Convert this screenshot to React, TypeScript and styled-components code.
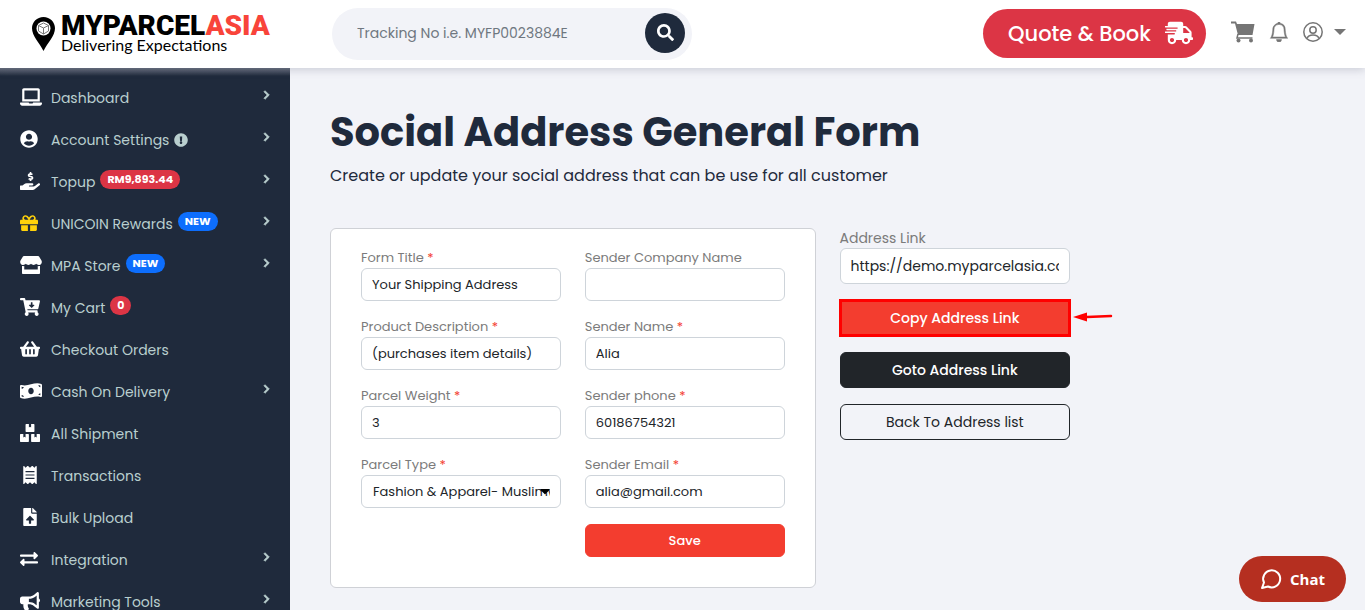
import React from 'react';
import styled, { createGlobalStyle, css } from 'styled-components';
import {
  FaLaptop, FaUserCircle, FaHandHoldingUsd, FaGift, FaStore, FaCartArrowDown,
  FaShoppingBasket, FaMoneyBillWave, FaBoxes, FaReceipt, FaFileUpload, FaExchangeAlt,
  FaBullhorn, FaExclamationCircle, FaShippingFast, FaCaretDown, FaSearch,
} from 'react-icons/fa';
import { BiChevronRight } from 'react-icons/bi';
import { BsBell } from 'react-icons/bs';

const navy = '#1f2a3c';
const red = '#f33d2f';
const crimson = '#dc3545';

const GlobalStyle = createGlobalStyle`
  *, *::before, *::after { box-sizing: border-box; }
  body {
    margin: 0;
    background: #f2f3f8;
    color: ${navy};
    font-family: Poppins, Inter, sans-serif;
    font-size: 14px;
  }
  button, input, select { font-family: inherit; }
  a { color: inherit; text-decoration: none; }
`;

const Page = styled.div`
  display: flex;
  flex-direction: column;
  height: 100vh;
  overflow: hidden;
`;

const TopBar = styled.header`
  position: relative;
  z-index: 1;
  display: flex;
  align-items: center;
  flex: none;
  height: 68px;
  padding: 0 19px 0 32px;
  background: #fff;
  box-shadow: 0 2px 8px rgba(90, 97, 120, 0.25);
`;

const Logo = styled.a`
  display: flex;
  align-items: center;
  gap: 6px;
  width: 300px;
  flex: none;
  color: #000;
`;

const LogoText = styled.span`
  display: flex;
  flex-direction: column;
`;

const Brand = styled.span`
  font: 900 28px/22px Roboto, sans-serif;
  span { color: #f8443a; }
`;

const Tagline = styled.span`
  font: 400 16px/16px Lato, sans-serif;
`;

const Search = styled.form`
  display: flex;
  align-items: center;
  width: 360px;
  height: 52px;
  padding: 0 7px 2px 25px;
  border-radius: 26px;
  background: #f2f3f8;
`;

const SearchInput = styled.input`
  flex: 1;
  min-width: 0;
  padding: 0;
  border: 0;
  outline: 0;
  background: none;
  font-size: 14px;
  color: ${navy};
  &::placeholder { color: #6f7780; opacity: 1; }
`;

const RoundButton = styled.button`
  display: grid;
  place-items: center;
  width: 40px;
  height: 40px;
  padding: 0 0 2px;
  border: 0;
  border-radius: 50%;
  background: ${navy};
  color: #fff;
`;

const QuoteButton = styled.button`
  display: flex;
  align-items: center;
  gap: 14px;
  width: 223px;
  height: 49px;
  margin: 0 25px 2px auto;
  padding: 0 0 0 25px;
  border: 0;
  border-radius: 25px;
  background: ${crimson};
  color: #fff;
  font-size: 21px;
  font-weight: 500;
`;

const Tools = styled.nav`
  display: flex;
  align-items: center;
  gap: 14px;
  padding-bottom: 4px;
  color: #757575;
`;

const ToolLink = styled.a`
  display: flex;
  align-items: center;
  gap: 11px;
`;

const Bell = styled(BsBell)`
  stroke: currentColor;
  stroke-width: 0.4;
`;

const Body = styled.div`
  display: flex;
  flex: 1;
  min-height: 0;
`;

const Sidebar = styled.nav`
  flex: none;
  width: 290px;
  padding-top: 9px;
  overflow: hidden;
  background: linear-gradient(#646b7a, ${navy} 8px);
`;

const NavItem = styled.a`
  display: flex;
  align-items: center;
  height: 42px;
  padding: 0 15px 0 20px;
  color: #b9cfcf;
`;

const NavIcon = styled.span<{ $color?: string; $width: number }>`
  display: flex;
  flex: none;
  width: 31px;
  padding-left: ${(p) => (p.$width < 16 ? 3 : 0)}px;
  padding-bottom: 2px;
  color: ${(p) => p.$color || '#fff'};
  svg {
    flex: none;
    width: ${(p) => p.$width}px;
    height: 18px;
  }
`;

const NavLabel = styled.span`
  display: flex;
  align-items: center;
  gap: 5px;
  flex: 1;
`;

const Badge = styled.span<{ $color: string }>`
  padding: 0 7px;
  margin-bottom: 6px;
  border-radius: 10px;
  background: ${(p) => p.$color};
  color: #fff;
  font-size: 11px;
  font-weight: 700;
  line-height: 19px;
`;

const Chevron = styled(BiChevronRight)`
  margin-bottom: 6px;
  stroke: currentColor;
  stroke-width: 1;
`;

const Main = styled.main`
  flex: 1;
  min-width: 0;
  padding: 36px 40px 22px;
`;

const Title = styled.h1`
  margin: 0;
  font-size: 40px;
  line-height: 56px;
  font-weight: 700;
`;

const Subtitle = styled.p`
  margin: 0 0 40px;
  padding-top: 3px;
  font-size: 16px;
  line-height: 25px;
`;

const Columns = styled.div`
  display: grid;
  grid-template-columns: repeat(12, minmax(0, 1fr));
  column-gap: 24px;
  align-items: start;
`;

const Card = styled.form`
  grid-column: span 6;
  display: grid;
  grid-template-columns: 1fr 1fr;
  gap: 16px 24px;
  padding: 19px 30px 30px;
  border: 1px solid #cfd1d6;
  border-radius: 6px;
  background: #fff;
`;

const Field = styled.div`
  display: flex;
  flex-direction: column;
`;

const Label = styled.label<{ $large?: boolean }>`
  color: #7b7b7b;
  font-size: ${(p) => (p.$large ? 14 : 13)}px;
  line-height: 20px;
  span { color: ${red}; }
`;

const control = css<{ $large?: boolean }>`
  width: 100%;
  height: ${(p) => (p.$large ? 36 : 33)}px;
  padding: 0 10px;
  border: 1px solid #ced4da;
  border-radius: 6px;
  background: #fff;
  color: #212529;
  font-size: ${(p) => (p.$large ? 14 : 13)}px;
`;

const TextInput = styled.input`${control}`;

const SelectWrap = styled.div`
  position: relative;
  svg {
    position: absolute;
    top: 8px;
    right: 8px;
    color: #000;
    pointer-events: none;
  }
`;

const Select = styled.select`
  ${control}
  appearance: none;
  padding-left: 11px;
`;

const Button = styled.button<{ $kind?: 'dark' | 'outline'; $large?: boolean; $marked?: boolean }>`
  width: 100%;
  height: ${(p) => (p.$large ? 36 : 33)}px;
  padding: 0;
  border: 1px solid ${(p) => (p.$kind ? '#212529' : red)};
  border-radius: ${(p) => (p.$marked ? 0 : 6)}px;
  outline: ${(p) => (p.$marked ? '3px solid #f00' : 'none')};
  outline-offset: -2px;
  background: ${(p) => (p.$kind === 'outline' ? 'transparent' : p.$kind === 'dark' ? '#212529' : red)};
  color: ${(p) => (p.$kind === 'outline' ? '#212529' : '#fff')};
  font-size: ${(p) => (p.$large ? 14 : 13)}px;
  font-weight: ${(p) => (p.$kind === 'outline' ? 400 : 500)};
`;

const Aside = styled.div`
  grid-column: span 3;
  display: flex;
  flex-direction: column;
  gap: 16px;
`;

const Marked = styled.div`
  position: relative;
  display: flex;
`;

const Arrow = styled.svg`
  position: absolute;
  left: 100%;
  top: 10px;
  margin-left: 3px;
`;

const Chat = styled.button`
  position: fixed;
  right: 19px;
  bottom: 8px;
  display: flex;
  align-items: center;
  justify-content: center;
  gap: 8px;
  width: 107px;
  height: 46px;
  padding: 0;
  border: 0;
  border-radius: 23px;
  background: #b52f20;
  color: #fff;
  font: 700 15px "Open Sans", sans-serif;
`;

type Item = {
  label: string;
  icon: React.ReactNode;
  width: number;
  color?: string;
  badge?: [string, string];
  info?: boolean;
  open?: boolean;
};

const items: Item[] = [
  { label: 'Dashboard', icon: <FaLaptop />, width: 22, open: true },
  { label: 'Account Settings', icon: <FaUserCircle />, width: 18, info: true, open: true },
  { label: 'Topup', icon: <FaHandHoldingUsd />, width: 20, badge: ['RM9,893.44', crimson], open: true },
  { label: 'UNICOIN Rewards', icon: <FaGift />, width: 18, color: '#ffd20a', badge: ['NEW', '#0d6efd'], open: true },
  { label: 'MPA Store', icon: <FaStore />, width: 22, badge: ['NEW', '#0d6efd'], open: true },
  { label: 'My Cart', icon: <FaCartArrowDown />, width: 20, badge: ['0', crimson] },
  { label: 'Checkout Orders', icon: <FaShoppingBasket />, width: 20 },
  { label: 'Cash On Delivery', icon: <FaMoneyBillWave />, width: 22, open: true },
  { label: 'All Shipment', icon: <FaBoxes />, width: 20 },
  { label: 'Transactions', icon: <FaReceipt />, width: 14 },
  { label: 'Bulk Upload', icon: <FaFileUpload />, width: 14 },
  { label: 'Integration', icon: <FaExchangeAlt />, width: 18, open: true },
  { label: 'Marketing Tools', icon: <FaBullhorn />, width: 20, open: true },
];

type FieldProps = { id: string; label: string; value?: string; required?: boolean };

const TextField = ({ id, label, value = '', required }: FieldProps) => (
  <Field>
    <Label htmlFor={id}>{label} {required && <span>*</span>}</Label>
    <TextInput id={id} defaultValue={value} />
  </Field>
);

export default function App() {
  return (
    <Page>
      <GlobalStyle />
      <TopBar>
        <Logo href="#">
          <svg width="23" height="34" viewBox="0 0 23 34" fill="none">
            <path d="M11.500 0C5 0 0 5 0 11.300 0 19 7.500 26 11.500 34 15.500 26 23 19 23 11.300 23 5 18 0 11.500 0Z" fill="#000" />
            <circle cx="11.500" cy="11.500" r="7" fill="#fff" />
            <path d="M11.500 6 16.500 8.500V14L11.500 17 6.500 14V8.500ZM6.500 8.500 11.500 11 16.500 8.500M11.500 11V17" stroke="#777" strokeWidth="1" />
          </svg>
          <LogoText>
            <Brand>MYPARCEL<span>ASIA</span></Brand>
            <Tagline>Delivering Expectations</Tagline>
          </LogoText>
        </Logo>
        <Search onSubmit={(e) => e.preventDefault()}>
          <SearchInput aria-label="Tracking number" placeholder="Tracking No i.e. MYFP0023884E" />
          <RoundButton aria-label="Search"><FaSearch size={17} /></RoundButton>
        </Search>
        <QuoteButton>Quote &amp; Book <FaShippingFast size={28} /></QuoteButton>
        <Tools>
          <ToolLink href="#" aria-label="Cart">
            <svg width="24" height="22" viewBox="0 0 24 22" fill="none">
              <path d="M0 0.500H5L6 3H23.500L21.500 14H7L4 2.500H0Z" fill="currentColor" />
              <path d="M7 13 6 17H21.500" stroke="currentColor" strokeWidth="1.500" />
              <circle cx="7.500" cy="19.500" r="2" fill="currentColor" />
              <circle cx="20" cy="19.500" r="2" fill="currentColor" />
            </svg>
          </ToolLink>
          <ToolLink href="#" aria-label="Notifications"><Bell size={20} /></ToolLink>
          <ToolLink href="#" aria-label="Account">
            <svg width="20" height="20" viewBox="0 0 20 20" fill="none" stroke="currentColor" strokeWidth="1.500">
              <circle cx="10" cy="10" r="9.200" />
              <circle cx="10" cy="8" r="3.200" />
              <path d="M4 16.500C5 13.500 7 13 10 13S15 13.500 16 16.500" />
            </svg>
            <svg width="12" height="6" viewBox="0 0 12 6"><path d="M0 0H12L6 6Z" fill="currentColor" /></svg>
          </ToolLink>
        </Tools>
      </TopBar>
      <Body>
        <Sidebar>
          {items.map((item) => (
            <NavItem href="#" key={item.label}>
              <NavIcon $color={item.color} $width={item.width}>{item.icon}</NavIcon>
              <NavLabel>
                {item.label}
                {item.info && <FaExclamationCircle size={14} />}
                {item.badge && <Badge $color={item.badge[1]}>{item.badge[0]}</Badge>}
              </NavLabel>
              {item.open && <Chevron size={18} />}
            </NavItem>
          ))}
        </Sidebar>
        <Main>
          <Title>Social Address General Form</Title>
          <Subtitle>Create or update your social address that can be use for all customer</Subtitle>
          <Columns>
            <Card onSubmit={(e) => e.preventDefault()}>
              <TextField id="title" label="Form Title" value="Your Shipping Address" required />
              <TextField id="company" label="Sender Company Name" />
              <TextField id="product" label="Product Description" value="(purchases item details)" required />
              <TextField id="name" label="Sender Name" value="Alia" required />
              <TextField id="weight" label="Parcel Weight" value="3" required />
              <TextField id="phone" label="Sender phone" value="60186754321" required />
              <Field>
                <Label htmlFor="type">Parcel Type <span>*</span></Label>
                <SelectWrap>
                  <Select id="type"><option>Fashion &amp; Apparel- Muslimwear</option></Select>
                  <FaCaretDown size={16} />
                </SelectWrap>
              </Field>
              <TextField id="email" label="Sender Email" value="alia@gmail.com" required />
              <span />
              <Button>Save</Button>
            </Card>
            <Aside>
              <Field>
                <Label htmlFor="link" $large>Address Link</Label>
                <TextInput id="link" $large defaultValue="https://demo.myparcelasia.com/social-address" />
              </Field>
              <Marked>
                <Button $large $marked>Copy Address Link</Button>
                <Arrow width="40" height="14" viewBox="0 0 40 14">
                  <path d="M14 7 38 6" stroke="#f00" strokeWidth="2.500" strokeLinecap="round" />
                  <path d="M0 7 14 2.500V11.500Z" fill="#f00" />
                </Arrow>
              </Marked>
              <Button $large $kind="dark">Goto Address Link</Button>
              <Button $large $kind="outline">Back To Address list</Button>
            </Aside>
          </Columns>
        </Main>
      </Body>
      <Chat>
        <svg width="22" height="22" viewBox="0 0 22 22" fill="none" stroke="#fff" strokeWidth="2" strokeLinejoin="round">
          <path d="M2 20 4 14.500A8.500 8.500 0 1 1 8 18.500Z" />
        </svg>
        Chat
      </Chat>
    </Page>
  );
}
